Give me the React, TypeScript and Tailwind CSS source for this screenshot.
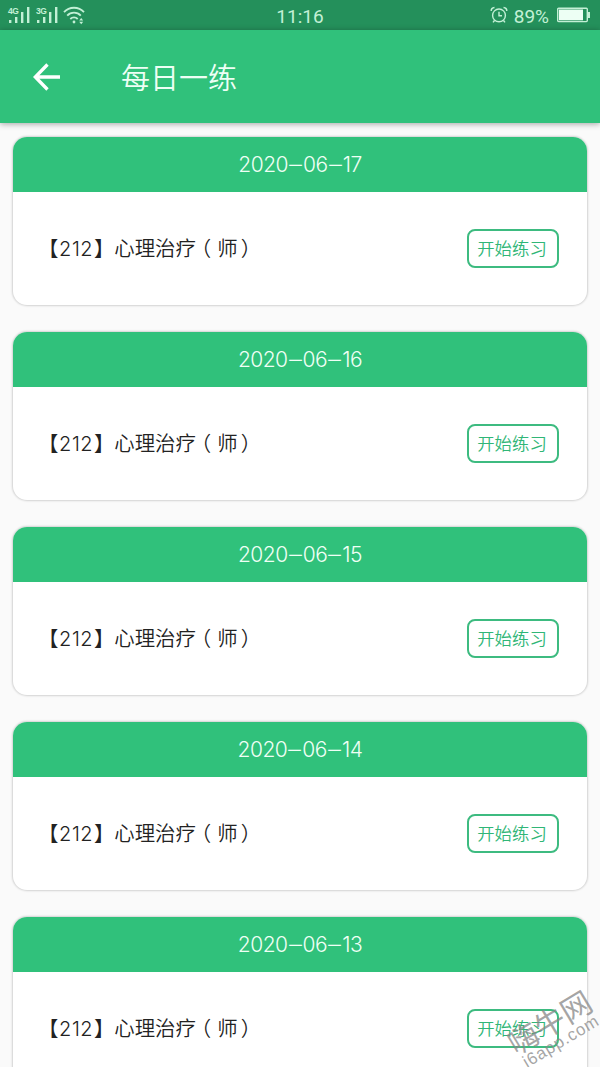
import React from 'react'

interface Practice {
  date: string
  title: string
  level: string
}

const practices: Practice[] = [
  { date: '2020-06-17', title: '心理治疗', level: '师' },
  { date: '2020-06-16', title: '心理治疗', level: '师' },
  { date: '2020-06-15', title: '心理治疗', level: '师' },
  { date: '2020-06-14', title: '心理治疗', level: '师' },
  { date: '2020-06-13', title: '心理治疗', level: '师' },
]

const Signal: React.FC<{ label: string }> = ({ label }) => (
  <div className="relative h-[17px] w-[23px]">
    <span className="absolute left-0 top-0 font-['Liberation_Sans'] text-[8.5px] font-bold leading-[8px] tracking-[-0.4px]">
      {label}
    </span>
    <svg className="absolute left-0 top-0" width="23" height="17" fill="currentColor">
      <rect x="1" y="13" width="2.4" height="3" />
      <rect x="7" y="10" width="2.4" height="6" />
      <rect x="13" y="5" width="2.4" height="11" />
      <rect x="19" y="0" width="2.4" height="16" />
    </svg>
  </div>
)

const StatusBar: React.FC = () => (
  <div className="grid h-[30px] grid-cols-3 items-center bg-[#24905b] text-[#c3f0d6]">
    <div className="flex items-center pl-[8px]">
      <Signal label="4G" />
      <div className="w-[5px]" />
      <Signal label="3G" />
      {/* Wifi */}
      <svg className="ml-[4px]" width="24" height="19" fill="none" stroke="currentColor" strokeWidth="1.8">
        <path d="M1 6.2a13.5 13.5 0 0 1 20 0M4.2 9.7a9.2 9.2 0 0 1 13.6 0M7.3 13a5.2 5.2 0 0 1 7.4 0" />
        <circle cx="11" cy="16" r="1.4" fill="currentColor" stroke="none" />
        <path d="M16.2 14.4l2-2.4 2 2.4zM16.2 15.8l2 2.4 2-2.4z" fill="currentColor" stroke="none" />
      </svg>
    </div>
    <div className="pt-[3px] text-center font-[Roboto] text-[19px] font-normal leading-none">11:16</div>
    <div className="flex items-center justify-end pr-[9px]">
      {/* Alarm clock */}
      <svg width="18" height="18" fill="none" stroke="currentColor" strokeWidth="1.4">
        <circle cx="9" cy="9.4" r="6.4" />
        <path d="M9 5.7v4h3M1.2 5Q1 2 4.5 1.5M13.5 1.5Q17 2 16.8 5M4.5 14.5 3 16.4M13.5 14.5l1.5 1.9" />
      </svg>
      <span className="ml-[6px] pt-[2px] font-[Roboto] text-[19px] font-normal leading-none">89%</span>
      {/* Battery */}
      <svg className="ml-[8px]" width="34" height="16" fill="none" stroke="currentColor">
        <rect x="0.7" y="1.2" width="29.6" height="13.4" rx="1" strokeWidth="1.4" />
        <rect x="2" y="2.5" width="24" height="10.8" fill="#edfff4" stroke="none" />
        <rect x="31" y="5" width="2" height="6" fill="currentColor" stroke="none" />
      </svg>
    </div>
  </div>
)

const TopBar: React.FC = () => (
  <header className="relative flex h-[93px] shrink-0 items-center bg-[#30c17b] pl-[33px] text-white shadow-[0_1px_6px_rgba(0,0,0,0.35)]">
    <svg width="28" height="28" fill="none" stroke="currentColor" strokeWidth="3.3">
      <path d="M14.5 1.5 2.3 14l12.2 12.5M2 14h25" />
    </svg>
    <h1 className="ml-[60px] text-[29px] font-[350] leading-none text-[#edfff5]">每日一练</h1>
  </header>
)

const PracticeCard: React.FC<Practice> = ({ date, title, level }) => {
  const parts = date.split('-')

  return (
    <div className="h-[168px] shrink-0 overflow-hidden rounded-[14px] bg-white shadow-[0_0_2px_1px_rgba(0,0,0,0.16)]">
      <div className="flex h-[55px] items-center justify-center bg-[#30c17b] pb-px font-[Inter] text-[21px] font-[350] leading-none text-[#effff5]">
        {parts.map((part, i) => (
          <React.Fragment key={i}>
            {i > 0 && <span className="inline-block w-[15px] scale-x-[2] text-center">-</span>}
            <span className="tracking-[-0.5px]">{part}</span>
          </React.Fragment>
        ))}
      </div>

      <div className="flex h-[113px] items-center justify-between pl-[25px] pr-[28px]">
        <p className="whitespace-nowrap pb-px text-[20.4px] font-[350] text-[#222]">
          【
          <span className="inline-block w-[35.5px] text-center font-[Inter] text-[20px] font-[350] tracking-[0.6px]">212</span>
          】{title}
          <span className="-ml-[5px] mr-[6px]">（</span>
          {level}
          <span className="ml-[3px]">）</span>
        </p>
        <button className="h-[39px] w-[92px] rounded-[8px] border-2 border-[#3dbb80] pb-px pr-[2px] text-[17.4px] font-[350] leading-none text-[#30b677]">
          开始练习
        </button>
      </div>
    </div>
  )
}

const App: React.FC = () => {
  return (
    <div className="relative flex h-[1067px] w-[600px] flex-col overflow-hidden bg-[#fafafa] font-['Noto_Sans_CJK_SC',sans-serif]">
      <StatusBar />
      <TopBar />

      <main className="flex min-h-0 flex-1 flex-col gap-[27px] overflow-hidden px-[13px] pt-[14px]">
        {practices.map((item) => (
          <PracticeCard key={item.date} {...item} />
        ))}
      </main>

      {/* Watermark */}
      <div className="absolute left-[501px] top-[1004px] flex w-[104px] -rotate-[31deg] flex-col items-center leading-none text-[#888]/75">
        <span className="text-[30.5px] leading-[32px]">嗨牛网</span>
        <span className="font-['Liberation_Sans'] text-[17px] leading-[16px] tracking-[0.8px]">i6app.com</span>
      </div>
    </div>
  )
}

export default App
